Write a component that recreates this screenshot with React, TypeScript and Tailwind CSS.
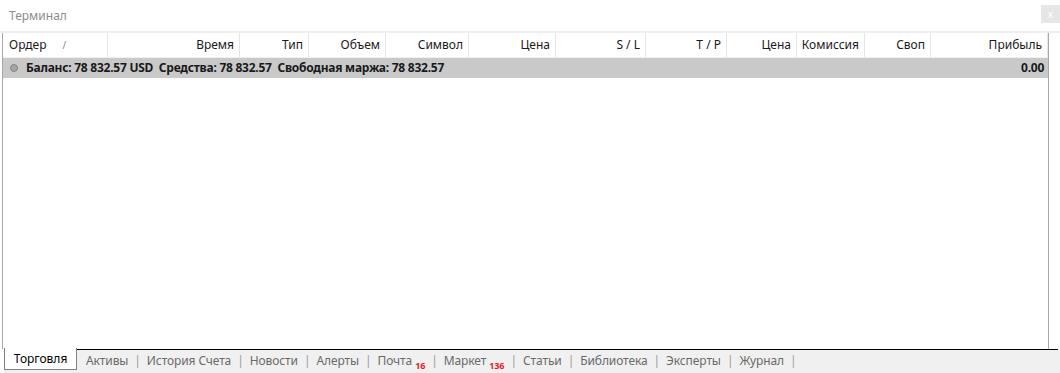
import React from "react";

const columns = [
  { label: "Ордер", w: 105, align: "left" },
  { label: "Время", w: 132, align: "right" },
  { label: "Тип", w: 69, align: "right" },
  { label: "Объем", w: 77, align: "right" },
  { label: "Символ", w: 83, align: "right" },
  { label: "Цена", w: 87, align: "right" },
  { label: "S / L", w: 90, align: "right" },
  { label: "T / P", w: 81, align: "right" },
  { label: "Цена", w: 70, align: "right" },
  { label: "Комиссия", w: 68, align: "right" },
  { label: "Своп", w: 66, align: "right" },
  { label: "Прибыль", w: 117, align: "right" },
];

const tabs: { label: string; badge?: string }[] = [
  { label: "Активы" },
  { label: "История Счета" },
  { label: "Новости" },
  { label: "Алерты" },
  { label: "Почта", badge: "16" },
  { label: "Маркет", badge: "136" },
  { label: "Статьи" },
  { label: "Библиотека" },
  { label: "Эксперты" },
  { label: "Журнал" },
];

export default function App() {
  return (
    <div
      className="w-[1060px] h-[373px] bg-white overflow-hidden flex flex-col text-[12px] text-[#1a1a1a]"
      style={{ fontFamily: '"Noto Sans", "Open Sans", sans-serif' }}
    >
      {/* title bar */}
      <div className="h-[31px] flex items-center justify-between pl-[9px] shrink-0">
        <span className="text-[#8c8c8c]">Терминал</span>
        <div className="w-[19px] h-[18px] mb-[3px] bg-[#e6e6e6] text-white text-[10px] flex items-center justify-center leading-none">
          x
        </div>
      </div>
      <div className="h-[2px] bg-[#efefef] shrink-0" />

      {/* list */}
      <div className="flex flex-1 min-h-0">
        <div className="w-[2px] shrink-0" />
        <div className="w-[1047px] border-l border-r border-[#a8a8a8] flex flex-col">
          <div className="h-[25px] flex border-b border-[#f0f0f0]">
            {columns.map((c, i) => (
              <div
                key={i}
                style={{ width: c.w }}
                className={`shrink-0 flex items-center border-r border-[#e5e5e5] ${
                  c.align === "left" ? "pl-[6px] justify-start" : "pr-[5px] justify-end"
                }`}
              >
                {c.label}
                {i === 0 && <span className="ml-[16px] text-[#888] text-[10px]">/</span>}
              </div>
            ))}
          </div>
          <div className="h-[20px] bg-[#c9c9c9] flex items-center font-bold pl-[7px] pr-[4px] tracking-[-0.25px]">
            <span className="w-[8px] h-[8px] rounded-full bg-[#a5a5a5] border border-[#858585] mr-[8px] shrink-0" />
            <span className="whitespace-pre">Баланс: 78 832.57 USD  Средства: 78 832.57  Свободная маржа: 78 832.57</span>
            <span className="ml-auto">0.00</span>
          </div>
          <div className="flex-1" />
        </div>
      </div>

      {/* tabs */}
      <div className="h-[24px] shrink-0 bg-[#f0f0f0] flex items-start relative">
        <div className="w-[4px] h-full bg-white" />
        <div className="h-[22px] w-[73px] bg-white border-l border-r border-b border-[#808080] flex items-center justify-center text-black -mt-[1px] z-10">
          Торговля
        </div>
        <div className="flex-1 flex flex-col">
          <div className="h-[1px] bg-black mr-[2px]" />
          <div className="flex items-center h-[21px] pl-[9px] text-[#6a6a6a] tracking-[-0.1px]">
            {tabs.map((t, i) => (
              <React.Fragment key={i}>
                <span className="flex items-end">
                  {t.label}
                  {t.badge && (
                    <span className="text-[9px] font-bold text-[#e02020] ml-[3px] translate-y-[3px]">{t.badge}</span>
                  )}
                </span>
                <span className="mx-[6px] text-[#9a9a9a]">|</span>
              </React.Fragment>
            ))}
          </div>
        </div>
      </div>
    </div>
  );
}
